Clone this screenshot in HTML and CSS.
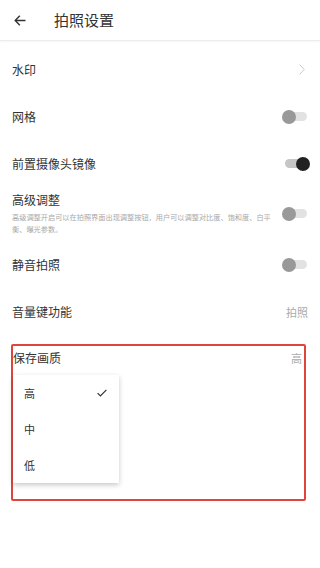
FILE: index.html
```html
<!DOCTYPE html>
<html lang="zh-CN">
<head>
    <meta charset="UTF-8">
    <meta name="viewport" content="width=device-width, initial-scale=1.0">
    <title>拍照设置</title>
    <link rel="stylesheet" href="styles.css">
</head>
<body>

    <!-- 顶部栏 -->
    <div class="header">
        <svg class="back" width="12" height="11" viewBox="0 0 12 11">
            <path d="M11.5 5.5H1.2M5.8 0.8L1.2 5.5L5.8 10.2" fill="none" stroke="#333" stroke-width="1.4"/>
        </svg>
        <span class="title">拍照设置</span>
    </div>

    <!-- 设置列表 -->
    <div class="list">
        <div class="row">
            <span class="label">水印</span>
            <svg class="chevron" width="6" height="11" viewBox="0 0 6 11">
                <path d="M0.6 0.6L5.2 5.5L0.6 10.4" fill="none" stroke="#c8c8c8" stroke-width="1"/>
            </svg>
        </div>

        <div class="row">
            <span class="label">网格</span>
            <span class="switch"></span>
        </div>

        <div class="row">
            <span class="label">前置摄像头镜像</span>
            <span class="switch on"></span>
        </div>

        <div class="row row-tall">
            <div class="text">
                <div class="label">高级调整</div>
                <div class="desc">高级调整开启可以在拍照界面出现调整按钮，用户可以调整对比度、饱和度、白平衡、曝光参数。</div>
            </div>
            <span class="switch"></span>
        </div>

        <div class="row">
            <span class="label">静音拍照</span>
            <span class="switch"></span>
        </div>

        <div class="row">
            <span class="label">音量键功能</span>
            <span class="value">拍照</span>
        </div>

        <!-- 保存画质 -->
        <div class="quality">
            <div class="quality-head">
                <span class="label">保存画质</span>
                <span class="value">高</span>
            </div>
            <div class="menu">
                <div class="menu-item">
                    <span>高</span>
                    <svg width="10" height="8" viewBox="0 0 10 8">
                        <path d="M0.6 4.2L3.4 7L9.4 0.8" fill="none" stroke="#333" stroke-width="1.2"/>
                    </svg>
                </div>
                <div class="menu-item"><span>中</span></div>
                <div class="menu-item"><span>低</span></div>
            </div>
        </div>
    </div>

</body>
</html>
```

FILE: styles.css
```css
body {
    margin: 0;
    background: #fff;
    font-family: "Noto Sans CJK SC", "Noto Sans", sans-serif;
    color: #333;
}
.header {
    height: 40px;
    display: flex;
    align-items: center;
    border-bottom: 1px solid #ececec;
    box-shadow: 0 1px 2px rgba(0, 0, 0, 0.04);
}
.header .back {
    margin-left: 14px;
}
.header .title {
    margin-left: 28px;
    font-size: 15px;
    line-height: 20px;
}
.list {
    padding-top: 5px;
}
.row {
    height: 47px;
    display: flex;
    align-items: center;
    justify-content: space-between;
    padding: 0 10px 0 12px;
}
.row-tall {
    height: auto;
    padding-top: 5px;
    padding-bottom: 6px;
}
.label {
    font-size: 12px;
    line-height: 16px;
}
.text {
    width: 262px;
}
.desc {
    margin-top: 3px;
    font-size: 7.2px;
    line-height: 12px;
    color: #a8a8a8;
}
.value {
    font-size: 11px;
    color: #aaa;
    margin-right: 2px;
}
.chevron {
    margin-right: 5px;
}
.switch {
    position: relative;
    width: 28px;
    height: 14px;
}
.switch::before {
    content: "";
    position: absolute;
    left: 3px;
    top: 2.5px;
    width: 22px;
    height: 9px;
    border-radius: 5px;
    background: #e2e2e2;
}
.switch::after {
    content: "";
    position: absolute;
    left: 0;
    top: 0;
    width: 14px;
    height: 14px;
    border-radius: 50%;
    background: #999;
}
.switch.on::before {
    background: #c6c6c6;
}
.switch.on::after {
    left: auto;
    right: 0;
    background: #222;
}
.quality {
    margin: 9px 14px 0 11px;
    height: 153px;
    border: 2px solid #de463d;
    border-radius: 2px;
}
.quality-head {
    display: flex;
    justify-content: space-between;
    align-items: center;
    padding: 3.5px 1px 0 0;
}
.quality-head .value {
    margin-right: 1px;
}
.menu {
    margin-top: 9px;
    width: 106px;
    background: #fff;
    box-shadow: 0 2px 5px rgba(0, 0, 0, 0.22);
}
.menu-item {
    height: 36px;
    display: flex;
    align-items: center;
    justify-content: space-between;
    padding: 0 12px 0 11px;
    font-size: 11px;
}
```
